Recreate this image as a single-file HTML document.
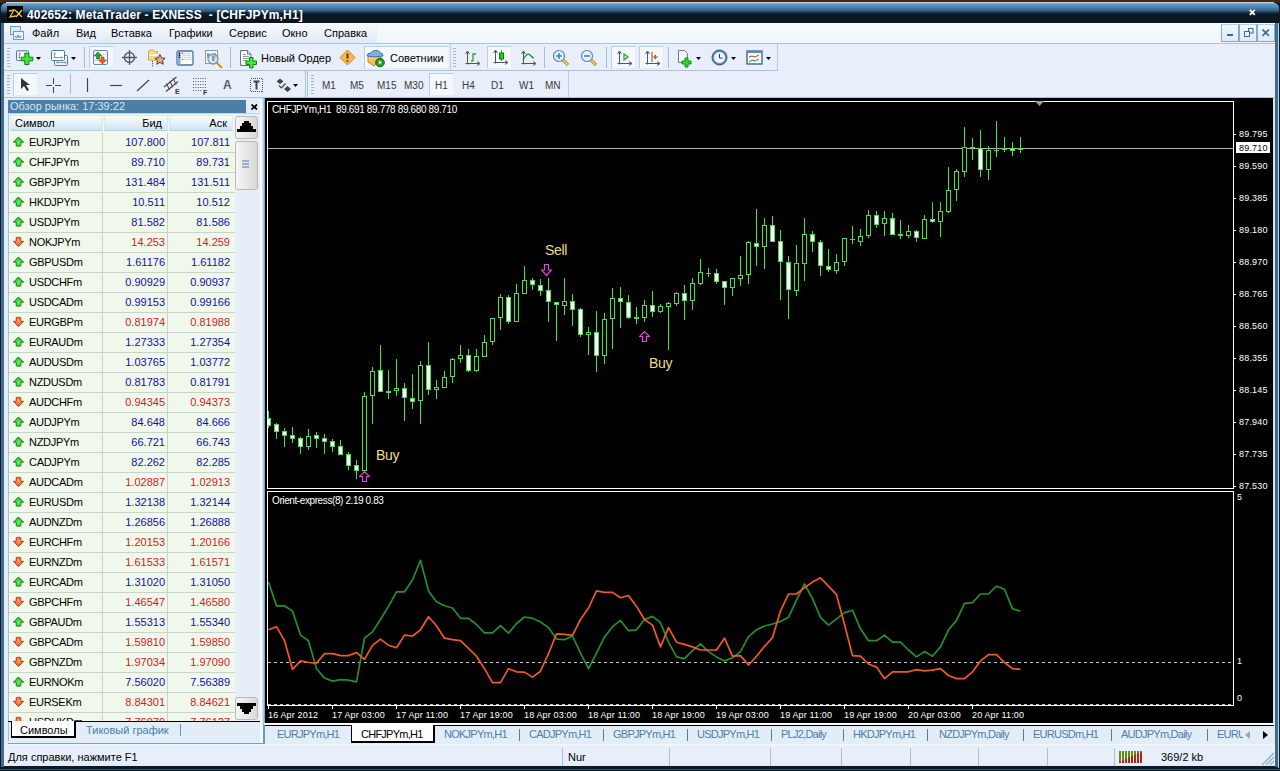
<!DOCTYPE html><html><head><meta charset="utf-8"><style>
*{margin:0;padding:0;box-sizing:border-box}
html,body{width:1280px;height:771px;overflow:hidden;background:#0b1722;font-family:"Liberation Sans",sans-serif;font-size:11px;color:#000}
.a{position:absolute}
.t{position:absolute;white-space:nowrap;line-height:13px}
</style></head><body>
<div class="a" style="left:0;top:0;width:1280px;height:3px;background:#4b2412"></div><div class="a" style="left:0;top:2px;width:1280px;height:769px;background:#0d1a25;border-radius:6px 6px 0 0"></div><div class="a" style="left:1px;top:23px;width:3px;height:744px;background:#3f6b8e"></div><div class="a" style="left:1275px;top:23px;width:3px;height:744px;background:#3f6b8e"></div><div class="a" style="left:1278px;top:8px;width:1px;height:760px;background:#b8d2e6"></div><div class="a" style="left:6px;top:2px;width:1268px;height:1px;background:#b8d8ee"></div><div class="a" style="left:1px;top:3px;width:1278px;height:20px;border-radius:5px 5px 0 0;background:linear-gradient(#80b4da 0px,#5e94bc 2px,#4a7ea6 5px,#2e5a7e 8px,#12263a 10px,#0b1722 12px,#0b1620 20px)"></div><div class="a" style="left:7px;top:6px;width:16px;height:15px;background:#000"></div><svg class="a" style="left:7px;top:6px" width="16" height="15"><path d="M2 5 L7 4 L3 11 L9 10" stroke="#e8c23a" stroke-width="1.3" fill="none"/><path d="M8 4 L15 11 M15 4 L9 11" stroke="#e8d040" stroke-width="1.3" fill="none"/></svg><div class="t" style="left:27px;top:9px;color:#fff;font-weight:bold;font-size:12px;letter-spacing:0.15px">402652: MetaTrader - EXNESS&nbsp; - [CHFJPYm,H1]</div><svg class="a" style="left:1249px;top:9px" width="7" height="7"><path d="M0.8 0.8 L5.8 5.8 M5.8 0.8 L0.8 5.8" stroke="#fff" stroke-width="1.8"/></svg><div class="a" style="left:4px;top:23px;width:1271px;height:21px;background:linear-gradient(#f8fbfd,#f0f6fa);border-bottom:1px solid #a7c4da"></div><div class="a" style="left:4px;top:24px;width:373px;height:19px;background:linear-gradient(#f4f8fc,#e8eef7 70%,#e2eaf5)"></div><svg class="a" style="left:9px;top:25px" width="16" height="16"><rect x="1.5" y="1.5" width="10" height="8" fill="#dbe8f4" stroke="#6f9cc4"/><rect x="4.5" y="6.5" width="10" height="8" fill="#e8f0f8" stroke="#6f9cc4"/><path d="M6 11 l1.5 2 l1.5 -3 l1.5 3 l1.5 -2" stroke="#4a7ab0" fill="none"/></svg><div class="t" style="left:32px;top:27px;color:#000">Файл</div><div class="t" style="left:76px;top:27px;color:#000">Вид</div><div class="t" style="left:111px;top:27px;color:#000">Вставка</div><div class="t" style="left:169px;top:27px;color:#000">Графики</div><div class="t" style="left:229px;top:27px;color:#000">Сервис</div><div class="t" style="left:282px;top:27px;color:#000">Окно</div><div class="t" style="left:324px;top:27px;color:#000">Справка</div><div class="a" style="left:1221px;top:24px;width:18px;height:18px;border:1px solid #86a8c6;border-top-color:#b8d0e4;background:linear-gradient(#eef6fc,#dcebf6)"></div><div class="a" style="left:1239px;top:24px;width:18px;height:18px;border:1px solid #86a8c6;border-top-color:#b8d0e4;background:linear-gradient(#eef6fc,#dcebf6)"></div><div class="a" style="left:1257px;top:24px;width:18px;height:18px;border:1px solid #86a8c6;border-top-color:#b8d0e4;background:linear-gradient(#eef6fc,#dcebf6)"></div><div class="a" style="left:1227px;top:34px;width:6px;height:2px;background:#3d6a90"></div><svg class="a" style="left:1244px;top:28px" width="10" height="10"><rect x="4.5" y="0.5" width="4.5" height="4.5" fill="none" stroke="#3d6a90"/><rect x="0.5" y="3.5" width="5" height="5" fill="#e8f0f8" stroke="#3d6a90"/></svg><svg class="a" style="left:1262px;top:29px" width="8" height="8"><path d="M0.5 0.5 L7 7 M7 0.5 L0.5 7" stroke="#3d6a90" stroke-width="1.7"/></svg><div class="a" style="left:4px;top:44px;width:1271px;height:54px;background:#e8eefa"></div><div class="a" style="left:4px;top:70px;width:774px;height:1px;background:#a9c4da"></div><div class="a" style="left:4px;top:97px;width:1271px;height:1px;background:#a9c4da"></div><div class="a" style="left:4px;top:44px;width:446px;height:26px;background:#e9effa"></div><div class="a" style="left:450px;top:44px;width:1px;height:26px;background:#b7cde0"></div><div class="a" style="left:451px;top:44px;width:327px;height:26px;background:#e9effa"></div><div class="a" style="left:777px;top:44px;width:1px;height:26px;background:#b7cde0"></div><div class="a" style="left:4px;top:71px;width:302px;height:26px;background:#e9effa"></div><div class="a" style="left:305px;top:71px;width:1px;height:26px;background:#a9c2d8"></div><div class="a" style="left:307px;top:71px;width:1px;height:26px;background:#a9c2d8"></div><div class="a" style="left:308px;top:71px;width:260px;height:26px;background:#e9effa"></div><div class="a" style="left:568px;top:71px;width:1px;height:26px;background:#b7cde0"></div><div class="a" style="left:7px;top:48px;width:3px;height:1px;background:#9fb5cb"></div><div class="a" style="left:7px;top:51px;width:3px;height:1px;background:#9fb5cb"></div><div class="a" style="left:7px;top:54px;width:3px;height:1px;background:#9fb5cb"></div><div class="a" style="left:7px;top:57px;width:3px;height:1px;background:#9fb5cb"></div><div class="a" style="left:7px;top:60px;width:3px;height:1px;background:#9fb5cb"></div><div class="a" style="left:7px;top:63px;width:3px;height:1px;background:#9fb5cb"></div><div class="a" style="left:7px;top:66px;width:3px;height:1px;background:#9fb5cb"></div><svg class="a" style="left:15px;top:49px" width="20" height="17"><rect x="1.5" y="1.5" width="12" height="10" rx="1" fill="#fafcfe" stroke="#4a78a8"/><path d="M2 2 h11" stroke="#8ab4dc" stroke-width="1.2"/><path d="M4.5 4 v5.5 M3.3 5.2 l1.2 -1.2 l1.2 1.2 M3.3 8.3 l1.2 1.2 l1.2 -1.2" stroke="#7a8a9a" fill="none" stroke-width=".9"/><path d="M9.8 4.1 h4.1 v4.1 h3.9 v3.6 h-3.9 v3.8 h-4.1 v-3.8 h-3.5 v-3.6 h3.5 z" fill="#3ee83e" stroke="#108010" stroke-width="1"/></svg><svg class="a" style="left:36px;top:57px" width="6" height="4"><path d="M0 0 H5 L2.5 3 Z" fill="#000"/></svg><svg class="a" style="left:50px;top:49px" width="20" height="18"><rect x="4.5" y="6.5" width="13" height="10" rx="1" fill="#eaf6fd" stroke="#4a78a8"/><rect x="1.5" y="1.5" width="13" height="10" rx="1" fill="#fafcfe" stroke="#4a78a8"/><path d="M4.6 4 v4.5 M3.5 5 l1.1 -1 l1.1 1 M3.5 8.5 h9 M11.5 7.5 l1 1 l-1 1 M6.5 13.5 h9.5 M7.5 12.5 l-1 1 l1 1 M15 12.5 l1 1 l-1 1" stroke="#7a8a9a" fill="none" stroke-width=".9"/></svg><svg class="a" style="left:71px;top:57px" width="6" height="4"><path d="M0 0 H5 L2.5 3 Z" fill="#000"/></svg><div class="a" style="left:84px;top:47px;width:1px;height:21px;background:#a3bdd4"></div><div class="a" style="left:89px;top:46px;width:25px;height:22px;background:#f4f7fb;border:1px solid #b8cfe2;border-right-color:#e4ecf4;border-bottom-color:#e4ecf4"></div><svg class="a" style="left:92px;top:49px" width="17" height="17"><rect x="1.5" y="1.5" width="14" height="14" rx="1.5" fill="#f6f9fc" stroke="#5c8ab5"/><path d="M6 3 l4 4 h-2.5 v3 h-3 v-3 h-2.5 z" fill="#22aa22" stroke="#127012" stroke-width=".6"/><path d="M10.5 15 l4 -4 h-2.5 v-3 h-3 v3 h-2.5 z" fill="#f05a20" stroke="#a83a10" stroke-width=".6"/><path d="M3 11.5 h4 M11 5.5 h3" stroke="#b0b8c0" stroke-dasharray="1 1"/></svg><svg class="a" style="left:121px;top:49px" width="17" height="17"><circle cx="8.5" cy="8.5" r="5" fill="none" stroke="#505a64" stroke-width="1.3"/><path d="M8.5 1 v15 M1 8.5 h15" stroke="#505a64" stroke-width="1.3"/></svg><svg class="a" style="left:146px;top:48px" width="22" height="20"><path d="M2.5 4 q0 -2 2 -2 h2 q1.5 0 2 1.5 h3 v8.5 h-9 z" fill="#f8e27a" stroke="#c8a838" stroke-width="1"/><rect x="3" y="5.5" width="9" height="3" fill="#fbf4e8" stroke="#d8b898" stroke-width=".6"/><path d="M14 6.5 l1.6 3.4 l3.6 .4 l-2.7 2.4 l.8 3.6 l-3.3 -1.9 l-3.3 1.9 l.8 -3.6 l-2.7 -2.4 l3.6 -.4 z" fill="#f3a282" stroke="#4a4a2a" stroke-width="1"/><path d="M6.5 13 v6" stroke="#333" stroke-dasharray="1 1.2"/></svg><svg class="a" style="left:176px;top:50px" width="18" height="16"><rect x="1" y="1" width="16" height="14" rx="1.5" fill="#fff" stroke="#3f72a8" stroke-width="1.3"/><rect x="1.5" y="1.5" width="3" height="13" fill="#8ab0d8"/><circle cx="3.5" cy="3.2" r=".8" fill="#000"/><circle cx="3.5" cy="5.3" r=".8" fill="#000"/><circle cx="3.5" cy="7.3" r=".8" fill="#000"/><path d="M6 3.2 h9 M6 5.3 h9 M6 7.3 h9 M6 9.4 h9" stroke="#b8c4d0" stroke-width=".8"/><circle cx="6.2" cy="3.2" r=".7" fill="#d02020"/><circle cx="6.2" cy="9.4" r=".7" fill="#d02020"/></svg><svg class="a" style="left:204px;top:49px" width="20" height="20"><rect x="1.5" y="1.5" width="12" height="13" fill="#f4f6f8" stroke="#8a96a2"/><path d="M4 4 v5 M11 4 v5 M3 6 h9" stroke="#4a6888" stroke-width="1"/><circle cx="9" cy="10" r="5" fill="rgba(200,216,232,.6)" stroke="#7898b8" stroke-width="1.3"/><rect x="8" y="7" width="2.5" height="5" fill="#8a9aa8"/><path d="M13 14 l5 5" stroke="#d8b030" stroke-width="2.4"/><path d="M13 14 l5 5" stroke="#6a5a20" stroke-width=".5"/></svg><div class="a" style="left:230px;top:47px;width:1px;height:21px;background:#a3bdd4"></div><svg class="a" style="left:239px;top:49px" width="22" height="20"><path d="M1.5 1.5 h7 l3.5 3.5 v11.5 h-10.5 z" fill="#f6f8fa" stroke="#6a7078"/><path d="M8.5 1.5 v3.5 h3.5" fill="#dde2e8" stroke="#6a7078"/><path d="M3.5 5.5 h3 M3.5 7.5 h6 M3.5 9.5 h6 M3.5 11.5 h4" stroke="#8a9098" stroke-width=".9" shape-rendering="crispEdges"/><path d="M10.5 8.5 h3.5 v3.5 h3.5 v3.5 h-3.5 v3.5 h-3.5 v-3.5 h-3.5 v-3.5 h3.5 z" fill="#3ee83e" stroke="#108010"/></svg><div class="t" style="left:261px;top:52px">Новый Ордер</div><svg class="a" style="left:339px;top:49px" width="17" height="17"><path d="M8.5 1 L16 8.5 L8.5 16 L1 8.5 Z" fill="#f7b84a" stroke="#c88a2a"/><path d="M8.5 4.5 v5" stroke="#5a3a10" stroke-width="2"/><circle cx="8.5" cy="12" r="1" fill="#5a3a10"/></svg><div class="a" style="left:364px;top:46px;width:85px;height:23px;background:#f4f7fb;border:1px solid #b8cfe2;border-right-color:#e4ecf4;border-bottom-color:#e4ecf4"></div><svg class="a" style="left:366px;top:48px" width="20" height="20"><path d="M2 9 h13 l-1 4 l-6 5 l-6 -4 z" fill="#f6c04a" stroke="#a07028" stroke-width=".8"/><path d="M2.5 10 h12" stroke="#f8e8a0" stroke-width="1.2"/><path d="M1 8 q0 -3 4 -3 q1.5 -3 5 -2.5 q3 -.5 4 2 q3 .5 3 3.5 q-8 2 -16 0 z" fill="#7eaee0" stroke="#3a6aa0" stroke-width=".9"/><circle cx="14" cy="14.5" r="4.3" fill="#22a022" stroke="#0e600e"/><path d="M12.8 12.3 v4.4 l3.3 -2.2 z" fill="#e8ffe8"/></svg><div class="t" style="left:390px;top:52px">Советники</div><div class="a" style="left:453px;top:48px;width:3px;height:1px;background:#9fb5cb"></div><div class="a" style="left:453px;top:51px;width:3px;height:1px;background:#9fb5cb"></div><div class="a" style="left:453px;top:54px;width:3px;height:1px;background:#9fb5cb"></div><div class="a" style="left:453px;top:57px;width:3px;height:1px;background:#9fb5cb"></div><div class="a" style="left:453px;top:60px;width:3px;height:1px;background:#9fb5cb"></div><div class="a" style="left:453px;top:63px;width:3px;height:1px;background:#9fb5cb"></div><div class="a" style="left:453px;top:66px;width:3px;height:1px;background:#9fb5cb"></div><svg class="a" style="left:464px;top:50px" width="17" height="17"><path d="M3.5 2 V14.5 M1.5 13.5 H15" stroke="#555" stroke-width="1"/><path d="M1.5 4 L3.5 1 L5.5 4 M13 11.5 L16 13.5 L13 15.5" fill="none" stroke="#555" stroke-width="1"/><path d="M9 11 v-7 h3 M7 11 h2" stroke="#22aa22" stroke-width="1.3" fill="none"/></svg><div class="a" style="left:487px;top:46px;width:25px;height:23px;background:#f4f7fb;border:1px solid #b8cfe2;border-right-color:#e4ecf4;border-bottom-color:#e4ecf4"></div><svg class="a" style="left:492px;top:49px" width="17" height="17"><path d="M3.5 2 V14.5 M1.5 13.5 H15" stroke="#555" stroke-width="1"/><path d="M1.5 4 L3.5 1 L5.5 4 M13 11.5 L16 13.5 L13 15.5" fill="none" stroke="#555" stroke-width="1"/><path d="M9.5 1 v11" stroke="#2a2" /><rect x="7.5" y="4" width="4" height="6" fill="#22cc22" stroke="#117711"/></svg><svg class="a" style="left:520px;top:50px" width="17" height="17"><path d="M3.5 2 V14.5 M1.5 13.5 H15" stroke="#555" stroke-width="1"/><path d="M1.5 4 L3.5 1 L5.5 4 M13 11.5 L16 13.5 L13 15.5" fill="none" stroke="#555" stroke-width="1"/><path d="M3 10 q4 -8 7 -5 t4 3" stroke="#228822" stroke-width="1.2" fill="none"/></svg><div class="a" style="left:544px;top:47px;width:1px;height:21px;background:#a3bdd4"></div><svg class="a" style="left:552px;top:49px" width="18" height="18"><circle cx="7" cy="7" r="5.5" fill="#e6f2fb" stroke="#4a84bc" stroke-width="1.2"/><path d="M4 7 h6 M7 4 v6" stroke="#4a84bc" stroke-width="1.6"/><path d="M11 11 l5 5" stroke="#6a5a20" stroke-width="3"/><path d="M11 11 l5 5" stroke="#f0d050" stroke-width="1.8"/></svg><svg class="a" style="left:580px;top:49px" width="18" height="18"><circle cx="7" cy="7" r="5.5" fill="#e6f2fb" stroke="#4a84bc" stroke-width="1.2"/><path d="M4 7 h6" stroke="#4a84bc" stroke-width="1.6"/><path d="M11 11 l5 5" stroke="#6a5a20" stroke-width="3"/><path d="M11 11 l5 5" stroke="#f0d050" stroke-width="1.8"/></svg><div class="a" style="left:606px;top:47px;width:1px;height:21px;background:#a3bdd4"></div><div class="a" style="left:611px;top:46px;width:25px;height:23px;background:#f4f7fb;border:1px solid #b8cfe2;border-right-color:#e4ecf4;border-bottom-color:#e4ecf4"></div><svg class="a" style="left:616px;top:50px" width="17" height="17"><path d="M3.5 2 V14.5 M1.5 13.5 H15" stroke="#555" stroke-width="1"/><path d="M1.5 4 L3.5 1 L5.5 4 M13 11.5 L16 13.5 L13 15.5" fill="none" stroke="#555" stroke-width="1"/><path d="M8 4 l4 3 l-4 3 z" fill="none" stroke="#22aa22" stroke-width="1.2"/></svg><div class="a" style="left:639px;top:46px;width:25px;height:23px;background:#f4f7fb;border:1px solid #b8cfe2;border-right-color:#e4ecf4;border-bottom-color:#e4ecf4"></div><svg class="a" style="left:644px;top:50px" width="17" height="17"><path d="M3.5 2 V14.5 M1.5 13.5 H15" stroke="#555" stroke-width="1"/><path d="M1.5 4 L3.5 1 L5.5 4 M13 11.5 L16 13.5 L13 15.5" fill="none" stroke="#555" stroke-width="1"/><path d="M8 2 v10" stroke="#555"/><path d="M14 7 h-4 M12 5 l-2 2 l2 2" stroke="#c05010" stroke-width="1.2" fill="none"/></svg><div class="a" style="left:668px;top:47px;width:1px;height:21px;background:#a3bdd4"></div><svg class="a" style="left:677px;top:49px" width="18" height="19"><path d="M1.5 1.5 h6 l3 3 v9 h-9 z" fill="#f4f6f8" stroke="#707880"/><path d="M8 9 h3 v3 h3 v3 h-3 v3 h-3 v-3 h-3 v-3 h3 z" fill="#2ed82e" stroke="#1a8a1a"/></svg><svg class="a" style="left:696px;top:57px" width="6" height="4"><path d="M0 0 H5 L2.5 3 Z" fill="#000"/></svg><svg class="a" style="left:711px;top:49px" width="18" height="18"><circle cx="8.5" cy="8.5" r="7.5" fill="#4a88cc" stroke="#2a5a94"/><circle cx="8.5" cy="8.5" r="5.6" fill="#f4f8fc" stroke="#9ab8d8" stroke-width=".6"/><path d="M8.5 5 v4 h3" stroke="#333" fill="none"/></svg><svg class="a" style="left:731px;top:57px" width="6" height="4"><path d="M0 0 H5 L2.5 3 Z" fill="#000"/></svg><svg class="a" style="left:746px;top:50px" width="18" height="16"><rect x="1" y="1" width="15" height="13" fill="#f6f9fc" stroke="#3f6a98" stroke-width="1.4"/><rect x="1" y="1" width="15" height="2" fill="#5a8ac0"/><path d="M3 7 l3 -1 l3 1 l4 -2" stroke="#b84010" fill="none"/><path d="M3 12 l3 -2 l3 1 l4 -2" stroke="#2a8a2a" fill="none"/></svg><svg class="a" style="left:766px;top:57px" width="6" height="4"><path d="M0 0 H5 L2.5 3 Z" fill="#000"/></svg><div class="a" style="left:7px;top:75px;width:3px;height:1px;background:#9fb5cb"></div><div class="a" style="left:7px;top:78px;width:3px;height:1px;background:#9fb5cb"></div><div class="a" style="left:7px;top:81px;width:3px;height:1px;background:#9fb5cb"></div><div class="a" style="left:7px;top:84px;width:3px;height:1px;background:#9fb5cb"></div><div class="a" style="left:7px;top:87px;width:3px;height:1px;background:#9fb5cb"></div><div class="a" style="left:7px;top:90px;width:3px;height:1px;background:#9fb5cb"></div><div class="a" style="left:7px;top:93px;width:3px;height:1px;background:#9fb5cb"></div><div class="a" style="left:13px;top:73px;width:25px;height:23px;background:#f4f7fb;border:1px solid #b8cfe2;border-right-color:#e4ecf4;border-bottom-color:#e4ecf4"></div><svg class="a" style="left:20px;top:77px" width="12" height="15"><path d="M1 1 L1 12 L4 9 L7 14 L9 13 L6 8 L10 8 Z" fill="#333"/></svg><svg class="a" style="left:45px;top:77px" width="17" height="17"><path d="M8.5 1 v6 M8.5 10 v6 M1 8.5 h6 M10 8.5 h6" stroke="#444" stroke-width="1"/></svg><div class="a" style="left:70px;top:74px;width:1px;height:20px;background:#a3bdd4"></div><svg class="a" style="left:86px;top:77px" width="3" height="16"><path d="M1.5 1 v14" stroke="#444" stroke-width="1.2"/></svg><svg class="a" style="left:109px;top:77px" width="15" height="16"><path d="M1 8.5 h12" stroke="#444" stroke-width="1.2"/></svg><svg class="a" style="left:136px;top:77px" width="15" height="16"><path d="M1 14 L13 3" stroke="#444" stroke-width="1.2"/></svg><svg class="a" style="left:162px;top:76px" width="20" height="20"><path d="M2 11 L14.5 1 M4 15.5 L16 5.5" stroke="#444" stroke-width="1.2"/><path d="M4.5 7.5 L7.5 14 M7.8 4.8 L10.8 11.3 M11.1 2.1 L14.1 8.6" stroke="#444" stroke-width="1"/><text x="13" y="18" font-size="7" font-weight="bold" fill="#333" font-family="Liberation Sans">E</text></svg><svg class="a" style="left:192px;top:77px" width="17" height="18"><path d="M1 1.5 h13 M1 4.5 h13 M1 7.5 h13 M1 10.5 h13 M1 13.5 h9" stroke="#555" stroke-dasharray="1 1.4"/><text x="11" y="17.5" font-size="7" font-weight="bold" fill="#333" font-family="Liberation Sans">F</text></svg><div class="t" style="left:223px;top:79px;font-weight:bold;font-size:12px;color:#575f66">A</div><svg class="a" style="left:249px;top:77px" width="15" height="16"><rect x="1.5" y="1.5" width="12" height="13" fill="none" stroke="#555" stroke-width="1" stroke-dasharray="1 1" shape-rendering="crispEdges"/><path d="M4.5 4.5 h6 M7.5 4.5 v8" stroke="#444" stroke-width="2"/></svg><svg class="a" style="left:276px;top:78px" width="16" height="15"><path d="M4 0.5 L7.5 3.5 L4 6 L0.5 3.5 Z M11.5 8 L15 11 L11.5 14 L8 11 Z" fill="#444"/><path d="M3 7.5 l2.5 2.5 l4 -4.5" stroke="#444" stroke-width="1.2" fill="none"/></svg><svg class="a" style="left:293px;top:84px" width="6" height="4"><path d="M0 0 H5 L2.5 3 Z" fill="#000"/></svg><div class="a" style="left:311px;top:75px;width:3px;height:1px;background:#9fb5cb"></div><div class="a" style="left:311px;top:78px;width:3px;height:1px;background:#9fb5cb"></div><div class="a" style="left:311px;top:81px;width:3px;height:1px;background:#9fb5cb"></div><div class="a" style="left:311px;top:84px;width:3px;height:1px;background:#9fb5cb"></div><div class="a" style="left:311px;top:87px;width:3px;height:1px;background:#9fb5cb"></div><div class="a" style="left:311px;top:90px;width:3px;height:1px;background:#9fb5cb"></div><div class="a" style="left:311px;top:93px;width:3px;height:1px;background:#9fb5cb"></div><div class="t" style="left:322px;top:79px;color:#3a3a3a;font-size:10px">M1</div><div class="t" style="left:350px;top:79px;color:#3a3a3a;font-size:10px">M5</div><div class="t" style="left:377px;top:79px;color:#3a3a3a;font-size:10px">M15</div><div class="t" style="left:404px;top:79px;color:#3a3a3a;font-size:10px">M30</div><div class="t" style="left:462px;top:79px;color:#3a3a3a;font-size:10px">H4</div><div class="t" style="left:491px;top:79px;color:#3a3a3a;font-size:10px">D1</div><div class="t" style="left:519px;top:79px;color:#3a3a3a;font-size:10px">W1</div><div class="t" style="left:545px;top:79px;color:#3a3a3a;font-size:10px">MN</div><div class="a" style="left:429px;top:73px;width:25px;height:23px;background:#f4f7fb;border:1px solid #b8cfe2;border-right-color:#e4ecf4;border-bottom-color:#e4ecf4"></div><div class="t" style="left:435px;top:79px;color:#3a3a3a;font-size:10px">H1</div><svg width="0" height="0" style="position:absolute"><defs><radialGradient id="gu" cx="50%" cy="60%" r="60%"><stop offset="0" stop-color="#6cf86c"/><stop offset="1" stop-color="#1aa81a"/></radialGradient><radialGradient id="gd" cx="50%" cy="40%" r="60%"><stop offset="0" stop-color="#ffa070"/><stop offset="1" stop-color="#e84e14"/></radialGradient></defs></svg><div class="a" style="left:4px;top:98px;width:261px;height:647px;background:#e3edf7"></div><div class="a" style="left:8px;top:100px;width:238px;height:13px;background:#4a7fa7"></div><div class="t" style="left:10px;top:100px;color:#d6e6f2;font-size:11px">Обзор рынка: 17:39:22</div><svg class="a" style="left:251px;top:104px" width="7" height="6"><path d="M0.5 0.5 L6 5.5 M6 0.5 L0.5 5.5" stroke="#000" stroke-width="1.7"/></svg><div class="a" style="left:8px;top:113px;width:252px;height:1px;background:#b9d3e8"></div><div class="a" style="left:8px;top:114px;width:227px;height:607px;background:#f0f8ec;border-left:1px solid #a9c1d6"></div><div class="a" style="left:9px;top:115px;width:226px;height:17px;background:#f0f8ec"></div><div class="a" style="left:10px;top:115px;width:93px;height:16px;background:linear-gradient(#f7fbfe,#e6f1f9 50%,#cfe3f1);border:1px solid #d8e8f4;border-bottom-color:#b4d0e4"></div><div class="a" style="left:104px;top:115px;width:64px;height:16px;background:linear-gradient(#f7fbfe,#e6f1f9 50%,#cfe3f1);border:1px solid #d8e8f4;border-bottom-color:#b4d0e4"></div><div class="a" style="left:169px;top:115px;width:64px;height:16px;background:linear-gradient(#f7fbfe,#e6f1f9 50%,#cfe3f1);border:1px solid #d8e8f4;border-bottom-color:#b4d0e4"></div><div class="t" style="left:15px;top:117px">Символ</div><div class="t" style="left:104px;top:117px;width:58px;text-align:right">Бид</div><div class="t" style="left:169px;top:117px;width:58px;text-align:right">Аск</div><div class="a" style="left:9px;top:133px;width:226px;height:20px;overflow:hidden"><div class="a" style="left:0;top:19px;width:226px;height:1px;background:#c9d3c9"></div><div class="a" style="left:93px;top:0;width:1px;height:20px;background:#c9d3c9"></div><div class="a" style="left:158px;top:0;width:1px;height:20px;background:#c9d3c9"></div><svg class="a" style="left:4px;top:3px" width="12" height="12"><path d="M5.5 1 L10.6 6.2 H7.8 V9.8 Q5.5 10.8 3.2 9.8 V6.2 H0.4 Z" fill="url(#gu)" stroke="#0e760e" stroke-width=".9"/></svg><div class="t" style="left:20px;top:3px;color:#000;letter-spacing:-0.3px">EURJPYm</div><div class="t" style="left:94px;top:3px;width:62px;text-align:right;color:#1010a4">107.800</div><div class="t" style="left:159px;top:3px;width:62px;text-align:right;color:#1010a4">107.811</div></div><div class="a" style="left:9px;top:153px;width:226px;height:20px;overflow:hidden"><div class="a" style="left:0;top:19px;width:226px;height:1px;background:#c9d3c9"></div><div class="a" style="left:93px;top:0;width:1px;height:20px;background:#c9d3c9"></div><div class="a" style="left:158px;top:0;width:1px;height:20px;background:#c9d3c9"></div><svg class="a" style="left:4px;top:3px" width="12" height="12"><path d="M5.5 1 L10.6 6.2 H7.8 V9.8 Q5.5 10.8 3.2 9.8 V6.2 H0.4 Z" fill="url(#gu)" stroke="#0e760e" stroke-width=".9"/></svg><div class="t" style="left:20px;top:3px;color:#000;letter-spacing:-0.3px">CHFJPYm</div><div class="t" style="left:94px;top:3px;width:62px;text-align:right;color:#1010a4">89.710</div><div class="t" style="left:159px;top:3px;width:62px;text-align:right;color:#1010a4">89.731</div></div><div class="a" style="left:9px;top:173px;width:226px;height:20px;overflow:hidden"><div class="a" style="left:0;top:19px;width:226px;height:1px;background:#c9d3c9"></div><div class="a" style="left:93px;top:0;width:1px;height:20px;background:#c9d3c9"></div><div class="a" style="left:158px;top:0;width:1px;height:20px;background:#c9d3c9"></div><svg class="a" style="left:4px;top:3px" width="12" height="12"><path d="M5.5 1 L10.6 6.2 H7.8 V9.8 Q5.5 10.8 3.2 9.8 V6.2 H0.4 Z" fill="url(#gu)" stroke="#0e760e" stroke-width=".9"/></svg><div class="t" style="left:20px;top:3px;color:#000;letter-spacing:-0.3px">GBPJPYm</div><div class="t" style="left:94px;top:3px;width:62px;text-align:right;color:#1010a4">131.484</div><div class="t" style="left:159px;top:3px;width:62px;text-align:right;color:#1010a4">131.511</div></div><div class="a" style="left:9px;top:193px;width:226px;height:20px;overflow:hidden"><div class="a" style="left:0;top:19px;width:226px;height:1px;background:#c9d3c9"></div><div class="a" style="left:93px;top:0;width:1px;height:20px;background:#c9d3c9"></div><div class="a" style="left:158px;top:0;width:1px;height:20px;background:#c9d3c9"></div><svg class="a" style="left:4px;top:3px" width="12" height="12"><path d="M5.5 1 L10.6 6.2 H7.8 V9.8 Q5.5 10.8 3.2 9.8 V6.2 H0.4 Z" fill="url(#gu)" stroke="#0e760e" stroke-width=".9"/></svg><div class="t" style="left:20px;top:3px;color:#000;letter-spacing:-0.3px">HKDJPYm</div><div class="t" style="left:94px;top:3px;width:62px;text-align:right;color:#1010a4">10.511</div><div class="t" style="left:159px;top:3px;width:62px;text-align:right;color:#1010a4">10.512</div></div><div class="a" style="left:9px;top:213px;width:226px;height:20px;overflow:hidden"><div class="a" style="left:0;top:19px;width:226px;height:1px;background:#c9d3c9"></div><div class="a" style="left:93px;top:0;width:1px;height:20px;background:#c9d3c9"></div><div class="a" style="left:158px;top:0;width:1px;height:20px;background:#c9d3c9"></div><svg class="a" style="left:4px;top:3px" width="12" height="12"><path d="M5.5 1 L10.6 6.2 H7.8 V9.8 Q5.5 10.8 3.2 9.8 V6.2 H0.4 Z" fill="url(#gu)" stroke="#0e760e" stroke-width=".9"/></svg><div class="t" style="left:20px;top:3px;color:#000;letter-spacing:-0.3px">USDJPYm</div><div class="t" style="left:94px;top:3px;width:62px;text-align:right;color:#1010a4">81.582</div><div class="t" style="left:159px;top:3px;width:62px;text-align:right;color:#1010a4">81.586</div></div><div class="a" style="left:9px;top:233px;width:226px;height:20px;overflow:hidden"><div class="a" style="left:0;top:19px;width:226px;height:1px;background:#c9d3c9"></div><div class="a" style="left:93px;top:0;width:1px;height:20px;background:#c9d3c9"></div><div class="a" style="left:158px;top:0;width:1px;height:20px;background:#c9d3c9"></div><svg class="a" style="left:4px;top:3px" width="12" height="12"><path d="M5.5 10.5 L10.6 5.3 H7.8 V1.7 Q5.5 .7 3.2 1.7 V5.3 H0.4 Z" fill="url(#gd)" stroke="#b03a0c" stroke-width=".9"/></svg><div class="t" style="left:20px;top:3px;color:#000;letter-spacing:-0.3px">NOKJPYm</div><div class="t" style="left:94px;top:3px;width:62px;text-align:right;color:#d41a1a">14.253</div><div class="t" style="left:159px;top:3px;width:62px;text-align:right;color:#d41a1a">14.259</div></div><div class="a" style="left:9px;top:253px;width:226px;height:20px;overflow:hidden"><div class="a" style="left:0;top:19px;width:226px;height:1px;background:#c9d3c9"></div><div class="a" style="left:93px;top:0;width:1px;height:20px;background:#c9d3c9"></div><div class="a" style="left:158px;top:0;width:1px;height:20px;background:#c9d3c9"></div><svg class="a" style="left:4px;top:3px" width="12" height="12"><path d="M5.5 1 L10.6 6.2 H7.8 V9.8 Q5.5 10.8 3.2 9.8 V6.2 H0.4 Z" fill="url(#gu)" stroke="#0e760e" stroke-width=".9"/></svg><div class="t" style="left:20px;top:3px;color:#000;letter-spacing:-0.3px">GBPUSDm</div><div class="t" style="left:94px;top:3px;width:62px;text-align:right;color:#1010a4">1.61176</div><div class="t" style="left:159px;top:3px;width:62px;text-align:right;color:#1010a4">1.61182</div></div><div class="a" style="left:9px;top:273px;width:226px;height:20px;overflow:hidden"><div class="a" style="left:0;top:19px;width:226px;height:1px;background:#c9d3c9"></div><div class="a" style="left:93px;top:0;width:1px;height:20px;background:#c9d3c9"></div><div class="a" style="left:158px;top:0;width:1px;height:20px;background:#c9d3c9"></div><svg class="a" style="left:4px;top:3px" width="12" height="12"><path d="M5.5 1 L10.6 6.2 H7.8 V9.8 Q5.5 10.8 3.2 9.8 V6.2 H0.4 Z" fill="url(#gu)" stroke="#0e760e" stroke-width=".9"/></svg><div class="t" style="left:20px;top:3px;color:#000;letter-spacing:-0.3px">USDCHFm</div><div class="t" style="left:94px;top:3px;width:62px;text-align:right;color:#1010a4">0.90929</div><div class="t" style="left:159px;top:3px;width:62px;text-align:right;color:#1010a4">0.90937</div></div><div class="a" style="left:9px;top:293px;width:226px;height:20px;overflow:hidden"><div class="a" style="left:0;top:19px;width:226px;height:1px;background:#c9d3c9"></div><div class="a" style="left:93px;top:0;width:1px;height:20px;background:#c9d3c9"></div><div class="a" style="left:158px;top:0;width:1px;height:20px;background:#c9d3c9"></div><svg class="a" style="left:4px;top:3px" width="12" height="12"><path d="M5.5 1 L10.6 6.2 H7.8 V9.8 Q5.5 10.8 3.2 9.8 V6.2 H0.4 Z" fill="url(#gu)" stroke="#0e760e" stroke-width=".9"/></svg><div class="t" style="left:20px;top:3px;color:#000;letter-spacing:-0.3px">USDCADm</div><div class="t" style="left:94px;top:3px;width:62px;text-align:right;color:#1010a4">0.99153</div><div class="t" style="left:159px;top:3px;width:62px;text-align:right;color:#1010a4">0.99166</div></div><div class="a" style="left:9px;top:313px;width:226px;height:20px;overflow:hidden"><div class="a" style="left:0;top:19px;width:226px;height:1px;background:#c9d3c9"></div><div class="a" style="left:93px;top:0;width:1px;height:20px;background:#c9d3c9"></div><div class="a" style="left:158px;top:0;width:1px;height:20px;background:#c9d3c9"></div><svg class="a" style="left:4px;top:3px" width="12" height="12"><path d="M5.5 10.5 L10.6 5.3 H7.8 V1.7 Q5.5 .7 3.2 1.7 V5.3 H0.4 Z" fill="url(#gd)" stroke="#b03a0c" stroke-width=".9"/></svg><div class="t" style="left:20px;top:3px;color:#000;letter-spacing:-0.3px">EURGBPm</div><div class="t" style="left:94px;top:3px;width:62px;text-align:right;color:#d41a1a">0.81974</div><div class="t" style="left:159px;top:3px;width:62px;text-align:right;color:#d41a1a">0.81988</div></div><div class="a" style="left:9px;top:333px;width:226px;height:20px;overflow:hidden"><div class="a" style="left:0;top:19px;width:226px;height:1px;background:#c9d3c9"></div><div class="a" style="left:93px;top:0;width:1px;height:20px;background:#c9d3c9"></div><div class="a" style="left:158px;top:0;width:1px;height:20px;background:#c9d3c9"></div><svg class="a" style="left:4px;top:3px" width="12" height="12"><path d="M5.5 1 L10.6 6.2 H7.8 V9.8 Q5.5 10.8 3.2 9.8 V6.2 H0.4 Z" fill="url(#gu)" stroke="#0e760e" stroke-width=".9"/></svg><div class="t" style="left:20px;top:3px;color:#000;letter-spacing:-0.3px">EURAUDm</div><div class="t" style="left:94px;top:3px;width:62px;text-align:right;color:#1010a4">1.27333</div><div class="t" style="left:159px;top:3px;width:62px;text-align:right;color:#1010a4">1.27354</div></div><div class="a" style="left:9px;top:353px;width:226px;height:20px;overflow:hidden"><div class="a" style="left:0;top:19px;width:226px;height:1px;background:#c9d3c9"></div><div class="a" style="left:93px;top:0;width:1px;height:20px;background:#c9d3c9"></div><div class="a" style="left:158px;top:0;width:1px;height:20px;background:#c9d3c9"></div><svg class="a" style="left:4px;top:3px" width="12" height="12"><path d="M5.5 1 L10.6 6.2 H7.8 V9.8 Q5.5 10.8 3.2 9.8 V6.2 H0.4 Z" fill="url(#gu)" stroke="#0e760e" stroke-width=".9"/></svg><div class="t" style="left:20px;top:3px;color:#000;letter-spacing:-0.3px">AUDUSDm</div><div class="t" style="left:94px;top:3px;width:62px;text-align:right;color:#1010a4">1.03765</div><div class="t" style="left:159px;top:3px;width:62px;text-align:right;color:#1010a4">1.03772</div></div><div class="a" style="left:9px;top:373px;width:226px;height:20px;overflow:hidden"><div class="a" style="left:0;top:19px;width:226px;height:1px;background:#c9d3c9"></div><div class="a" style="left:93px;top:0;width:1px;height:20px;background:#c9d3c9"></div><div class="a" style="left:158px;top:0;width:1px;height:20px;background:#c9d3c9"></div><svg class="a" style="left:4px;top:3px" width="12" height="12"><path d="M5.5 1 L10.6 6.2 H7.8 V9.8 Q5.5 10.8 3.2 9.8 V6.2 H0.4 Z" fill="url(#gu)" stroke="#0e760e" stroke-width=".9"/></svg><div class="t" style="left:20px;top:3px;color:#000;letter-spacing:-0.3px">NZDUSDm</div><div class="t" style="left:94px;top:3px;width:62px;text-align:right;color:#1010a4">0.81783</div><div class="t" style="left:159px;top:3px;width:62px;text-align:right;color:#1010a4">0.81791</div></div><div class="a" style="left:9px;top:393px;width:226px;height:20px;overflow:hidden"><div class="a" style="left:0;top:19px;width:226px;height:1px;background:#c9d3c9"></div><div class="a" style="left:93px;top:0;width:1px;height:20px;background:#c9d3c9"></div><div class="a" style="left:158px;top:0;width:1px;height:20px;background:#c9d3c9"></div><svg class="a" style="left:4px;top:3px" width="12" height="12"><path d="M5.5 10.5 L10.6 5.3 H7.8 V1.7 Q5.5 .7 3.2 1.7 V5.3 H0.4 Z" fill="url(#gd)" stroke="#b03a0c" stroke-width=".9"/></svg><div class="t" style="left:20px;top:3px;color:#000;letter-spacing:-0.3px">AUDCHFm</div><div class="t" style="left:94px;top:3px;width:62px;text-align:right;color:#d41a1a">0.94345</div><div class="t" style="left:159px;top:3px;width:62px;text-align:right;color:#d41a1a">0.94373</div></div><div class="a" style="left:9px;top:413px;width:226px;height:20px;overflow:hidden"><div class="a" style="left:0;top:19px;width:226px;height:1px;background:#c9d3c9"></div><div class="a" style="left:93px;top:0;width:1px;height:20px;background:#c9d3c9"></div><div class="a" style="left:158px;top:0;width:1px;height:20px;background:#c9d3c9"></div><svg class="a" style="left:4px;top:3px" width="12" height="12"><path d="M5.5 1 L10.6 6.2 H7.8 V9.8 Q5.5 10.8 3.2 9.8 V6.2 H0.4 Z" fill="url(#gu)" stroke="#0e760e" stroke-width=".9"/></svg><div class="t" style="left:20px;top:3px;color:#000;letter-spacing:-0.3px">AUDJPYm</div><div class="t" style="left:94px;top:3px;width:62px;text-align:right;color:#1010a4">84.648</div><div class="t" style="left:159px;top:3px;width:62px;text-align:right;color:#1010a4">84.666</div></div><div class="a" style="left:9px;top:433px;width:226px;height:20px;overflow:hidden"><div class="a" style="left:0;top:19px;width:226px;height:1px;background:#c9d3c9"></div><div class="a" style="left:93px;top:0;width:1px;height:20px;background:#c9d3c9"></div><div class="a" style="left:158px;top:0;width:1px;height:20px;background:#c9d3c9"></div><svg class="a" style="left:4px;top:3px" width="12" height="12"><path d="M5.5 1 L10.6 6.2 H7.8 V9.8 Q5.5 10.8 3.2 9.8 V6.2 H0.4 Z" fill="url(#gu)" stroke="#0e760e" stroke-width=".9"/></svg><div class="t" style="left:20px;top:3px;color:#000;letter-spacing:-0.3px">NZDJPYm</div><div class="t" style="left:94px;top:3px;width:62px;text-align:right;color:#1010a4">66.721</div><div class="t" style="left:159px;top:3px;width:62px;text-align:right;color:#1010a4">66.743</div></div><div class="a" style="left:9px;top:453px;width:226px;height:20px;overflow:hidden"><div class="a" style="left:0;top:19px;width:226px;height:1px;background:#c9d3c9"></div><div class="a" style="left:93px;top:0;width:1px;height:20px;background:#c9d3c9"></div><div class="a" style="left:158px;top:0;width:1px;height:20px;background:#c9d3c9"></div><svg class="a" style="left:4px;top:3px" width="12" height="12"><path d="M5.5 1 L10.6 6.2 H7.8 V9.8 Q5.5 10.8 3.2 9.8 V6.2 H0.4 Z" fill="url(#gu)" stroke="#0e760e" stroke-width=".9"/></svg><div class="t" style="left:20px;top:3px;color:#000;letter-spacing:-0.3px">CADJPYm</div><div class="t" style="left:94px;top:3px;width:62px;text-align:right;color:#1010a4">82.262</div><div class="t" style="left:159px;top:3px;width:62px;text-align:right;color:#1010a4">82.285</div></div><div class="a" style="left:9px;top:473px;width:226px;height:20px;overflow:hidden"><div class="a" style="left:0;top:19px;width:226px;height:1px;background:#c9d3c9"></div><div class="a" style="left:93px;top:0;width:1px;height:20px;background:#c9d3c9"></div><div class="a" style="left:158px;top:0;width:1px;height:20px;background:#c9d3c9"></div><svg class="a" style="left:4px;top:3px" width="12" height="12"><path d="M5.5 10.5 L10.6 5.3 H7.8 V1.7 Q5.5 .7 3.2 1.7 V5.3 H0.4 Z" fill="url(#gd)" stroke="#b03a0c" stroke-width=".9"/></svg><div class="t" style="left:20px;top:3px;color:#000;letter-spacing:-0.3px">AUDCADm</div><div class="t" style="left:94px;top:3px;width:62px;text-align:right;color:#d41a1a">1.02887</div><div class="t" style="left:159px;top:3px;width:62px;text-align:right;color:#d41a1a">1.02913</div></div><div class="a" style="left:9px;top:493px;width:226px;height:20px;overflow:hidden"><div class="a" style="left:0;top:19px;width:226px;height:1px;background:#c9d3c9"></div><div class="a" style="left:93px;top:0;width:1px;height:20px;background:#c9d3c9"></div><div class="a" style="left:158px;top:0;width:1px;height:20px;background:#c9d3c9"></div><svg class="a" style="left:4px;top:3px" width="12" height="12"><path d="M5.5 1 L10.6 6.2 H7.8 V9.8 Q5.5 10.8 3.2 9.8 V6.2 H0.4 Z" fill="url(#gu)" stroke="#0e760e" stroke-width=".9"/></svg><div class="t" style="left:20px;top:3px;color:#000;letter-spacing:-0.3px">EURUSDm</div><div class="t" style="left:94px;top:3px;width:62px;text-align:right;color:#1010a4">1.32138</div><div class="t" style="left:159px;top:3px;width:62px;text-align:right;color:#1010a4">1.32144</div></div><div class="a" style="left:9px;top:513px;width:226px;height:20px;overflow:hidden"><div class="a" style="left:0;top:19px;width:226px;height:1px;background:#c9d3c9"></div><div class="a" style="left:93px;top:0;width:1px;height:20px;background:#c9d3c9"></div><div class="a" style="left:158px;top:0;width:1px;height:20px;background:#c9d3c9"></div><svg class="a" style="left:4px;top:3px" width="12" height="12"><path d="M5.5 1 L10.6 6.2 H7.8 V9.8 Q5.5 10.8 3.2 9.8 V6.2 H0.4 Z" fill="url(#gu)" stroke="#0e760e" stroke-width=".9"/></svg><div class="t" style="left:20px;top:3px;color:#000;letter-spacing:-0.3px">AUDNZDm</div><div class="t" style="left:94px;top:3px;width:62px;text-align:right;color:#1010a4">1.26856</div><div class="t" style="left:159px;top:3px;width:62px;text-align:right;color:#1010a4">1.26888</div></div><div class="a" style="left:9px;top:533px;width:226px;height:20px;overflow:hidden"><div class="a" style="left:0;top:19px;width:226px;height:1px;background:#c9d3c9"></div><div class="a" style="left:93px;top:0;width:1px;height:20px;background:#c9d3c9"></div><div class="a" style="left:158px;top:0;width:1px;height:20px;background:#c9d3c9"></div><svg class="a" style="left:4px;top:3px" width="12" height="12"><path d="M5.5 10.5 L10.6 5.3 H7.8 V1.7 Q5.5 .7 3.2 1.7 V5.3 H0.4 Z" fill="url(#gd)" stroke="#b03a0c" stroke-width=".9"/></svg><div class="t" style="left:20px;top:3px;color:#000;letter-spacing:-0.3px">EURCHFm</div><div class="t" style="left:94px;top:3px;width:62px;text-align:right;color:#d41a1a">1.20153</div><div class="t" style="left:159px;top:3px;width:62px;text-align:right;color:#d41a1a">1.20166</div></div><div class="a" style="left:9px;top:553px;width:226px;height:20px;overflow:hidden"><div class="a" style="left:0;top:19px;width:226px;height:1px;background:#c9d3c9"></div><div class="a" style="left:93px;top:0;width:1px;height:20px;background:#c9d3c9"></div><div class="a" style="left:158px;top:0;width:1px;height:20px;background:#c9d3c9"></div><svg class="a" style="left:4px;top:3px" width="12" height="12"><path d="M5.5 10.5 L10.6 5.3 H7.8 V1.7 Q5.5 .7 3.2 1.7 V5.3 H0.4 Z" fill="url(#gd)" stroke="#b03a0c" stroke-width=".9"/></svg><div class="t" style="left:20px;top:3px;color:#000;letter-spacing:-0.3px">EURNZDm</div><div class="t" style="left:94px;top:3px;width:62px;text-align:right;color:#d41a1a">1.61533</div><div class="t" style="left:159px;top:3px;width:62px;text-align:right;color:#d41a1a">1.61571</div></div><div class="a" style="left:9px;top:573px;width:226px;height:20px;overflow:hidden"><div class="a" style="left:0;top:19px;width:226px;height:1px;background:#c9d3c9"></div><div class="a" style="left:93px;top:0;width:1px;height:20px;background:#c9d3c9"></div><div class="a" style="left:158px;top:0;width:1px;height:20px;background:#c9d3c9"></div><svg class="a" style="left:4px;top:3px" width="12" height="12"><path d="M5.5 1 L10.6 6.2 H7.8 V9.8 Q5.5 10.8 3.2 9.8 V6.2 H0.4 Z" fill="url(#gu)" stroke="#0e760e" stroke-width=".9"/></svg><div class="t" style="left:20px;top:3px;color:#000;letter-spacing:-0.3px">EURCADm</div><div class="t" style="left:94px;top:3px;width:62px;text-align:right;color:#1010a4">1.31020</div><div class="t" style="left:159px;top:3px;width:62px;text-align:right;color:#1010a4">1.31050</div></div><div class="a" style="left:9px;top:593px;width:226px;height:20px;overflow:hidden"><div class="a" style="left:0;top:19px;width:226px;height:1px;background:#c9d3c9"></div><div class="a" style="left:93px;top:0;width:1px;height:20px;background:#c9d3c9"></div><div class="a" style="left:158px;top:0;width:1px;height:20px;background:#c9d3c9"></div><svg class="a" style="left:4px;top:3px" width="12" height="12"><path d="M5.5 10.5 L10.6 5.3 H7.8 V1.7 Q5.5 .7 3.2 1.7 V5.3 H0.4 Z" fill="url(#gd)" stroke="#b03a0c" stroke-width=".9"/></svg><div class="t" style="left:20px;top:3px;color:#000;letter-spacing:-0.3px">GBPCHFm</div><div class="t" style="left:94px;top:3px;width:62px;text-align:right;color:#d41a1a">1.46547</div><div class="t" style="left:159px;top:3px;width:62px;text-align:right;color:#d41a1a">1.46580</div></div><div class="a" style="left:9px;top:613px;width:226px;height:20px;overflow:hidden"><div class="a" style="left:0;top:19px;width:226px;height:1px;background:#c9d3c9"></div><div class="a" style="left:93px;top:0;width:1px;height:20px;background:#c9d3c9"></div><div class="a" style="left:158px;top:0;width:1px;height:20px;background:#c9d3c9"></div><svg class="a" style="left:4px;top:3px" width="12" height="12"><path d="M5.5 1 L10.6 6.2 H7.8 V9.8 Q5.5 10.8 3.2 9.8 V6.2 H0.4 Z" fill="url(#gu)" stroke="#0e760e" stroke-width=".9"/></svg><div class="t" style="left:20px;top:3px;color:#000;letter-spacing:-0.3px">GBPAUDm</div><div class="t" style="left:94px;top:3px;width:62px;text-align:right;color:#1010a4">1.55313</div><div class="t" style="left:159px;top:3px;width:62px;text-align:right;color:#1010a4">1.55340</div></div><div class="a" style="left:9px;top:633px;width:226px;height:20px;overflow:hidden"><div class="a" style="left:0;top:19px;width:226px;height:1px;background:#c9d3c9"></div><div class="a" style="left:93px;top:0;width:1px;height:20px;background:#c9d3c9"></div><div class="a" style="left:158px;top:0;width:1px;height:20px;background:#c9d3c9"></div><svg class="a" style="left:4px;top:3px" width="12" height="12"><path d="M5.5 10.5 L10.6 5.3 H7.8 V1.7 Q5.5 .7 3.2 1.7 V5.3 H0.4 Z" fill="url(#gd)" stroke="#b03a0c" stroke-width=".9"/></svg><div class="t" style="left:20px;top:3px;color:#000;letter-spacing:-0.3px">GBPCADm</div><div class="t" style="left:94px;top:3px;width:62px;text-align:right;color:#d41a1a">1.59810</div><div class="t" style="left:159px;top:3px;width:62px;text-align:right;color:#d41a1a">1.59850</div></div><div class="a" style="left:9px;top:653px;width:226px;height:20px;overflow:hidden"><div class="a" style="left:0;top:19px;width:226px;height:1px;background:#c9d3c9"></div><div class="a" style="left:93px;top:0;width:1px;height:20px;background:#c9d3c9"></div><div class="a" style="left:158px;top:0;width:1px;height:20px;background:#c9d3c9"></div><svg class="a" style="left:4px;top:3px" width="12" height="12"><path d="M5.5 10.5 L10.6 5.3 H7.8 V1.7 Q5.5 .7 3.2 1.7 V5.3 H0.4 Z" fill="url(#gd)" stroke="#b03a0c" stroke-width=".9"/></svg><div class="t" style="left:20px;top:3px;color:#000;letter-spacing:-0.3px">GBPNZDm</div><div class="t" style="left:94px;top:3px;width:62px;text-align:right;color:#d41a1a">1.97034</div><div class="t" style="left:159px;top:3px;width:62px;text-align:right;color:#d41a1a">1.97090</div></div><div class="a" style="left:9px;top:673px;width:226px;height:20px;overflow:hidden"><div class="a" style="left:0;top:19px;width:226px;height:1px;background:#c9d3c9"></div><div class="a" style="left:93px;top:0;width:1px;height:20px;background:#c9d3c9"></div><div class="a" style="left:158px;top:0;width:1px;height:20px;background:#c9d3c9"></div><svg class="a" style="left:4px;top:3px" width="12" height="12"><path d="M5.5 1 L10.6 6.2 H7.8 V9.8 Q5.5 10.8 3.2 9.8 V6.2 H0.4 Z" fill="url(#gu)" stroke="#0e760e" stroke-width=".9"/></svg><div class="t" style="left:20px;top:3px;color:#000;letter-spacing:-0.3px">EURNOKm</div><div class="t" style="left:94px;top:3px;width:62px;text-align:right;color:#1010a4">7.56020</div><div class="t" style="left:159px;top:3px;width:62px;text-align:right;color:#1010a4">7.56389</div></div><div class="a" style="left:9px;top:693px;width:226px;height:20px;overflow:hidden"><div class="a" style="left:0;top:19px;width:226px;height:1px;background:#c9d3c9"></div><div class="a" style="left:93px;top:0;width:1px;height:20px;background:#c9d3c9"></div><div class="a" style="left:158px;top:0;width:1px;height:20px;background:#c9d3c9"></div><svg class="a" style="left:4px;top:3px" width="12" height="12"><path d="M5.5 10.5 L10.6 5.3 H7.8 V1.7 Q5.5 .7 3.2 1.7 V5.3 H0.4 Z" fill="url(#gd)" stroke="#b03a0c" stroke-width=".9"/></svg><div class="t" style="left:20px;top:3px;color:#000;letter-spacing:-0.3px">EURSEKm</div><div class="t" style="left:94px;top:3px;width:62px;text-align:right;color:#d41a1a">8.84301</div><div class="t" style="left:159px;top:3px;width:62px;text-align:right;color:#d41a1a">8.84621</div></div><div class="a" style="left:9px;top:713px;width:226px;height:8px;overflow:hidden"><div class="a" style="left:0;top:19px;width:226px;height:1px;background:#c9d3c9"></div><div class="a" style="left:93px;top:0;width:1px;height:20px;background:#c9d3c9"></div><div class="a" style="left:158px;top:0;width:1px;height:20px;background:#c9d3c9"></div><svg class="a" style="left:4px;top:3px" width="12" height="12"><path d="M5.5 10.5 L10.6 5.3 H7.8 V1.7 Q5.5 .7 3.2 1.7 V5.3 H0.4 Z" fill="url(#gd)" stroke="#b03a0c" stroke-width=".9"/></svg><div class="t" style="left:20px;top:3px;color:#000;letter-spacing:-0.3px">USDHKDm</div><div class="t" style="left:94px;top:3px;width:62px;text-align:right;color:#d41a1a">7.76079</div><div class="t" style="left:159px;top:3px;width:62px;text-align:right;color:#d41a1a">7.76127</div></div><div class="a" style="left:235px;top:115px;width:25px;height:606px;background:#e6eff8"></div><div class="a" style="left:260px;top:100px;width:3px;height:643px;background:#f4f9fd"></div><div class="a" style="left:235px;top:116px;width:23px;height:23px;border:1px solid #b8b8b8;border-radius:3px;background:linear-gradient(90deg,#f4f4f4,#e8e8e8 50%,#d8d8d8)"></div><svg class="a" style="left:237px;top:121px" width="19" height="11"><path d="M7 0 H12 V2 H14 V5 H16 V8 H19 V11 H0 V8 H3 V5 H5 V2 H7 Z" fill="#000"/></svg><div class="a" style="left:235px;top:141px;width:23px;height:49px;border:1px solid #b8b8b8;border-radius:3px;background:linear-gradient(90deg,#f4f4f4,#e8e8e8 50%,#d8d8d8)"></div><svg class="a" style="left:242px;top:160px" width="8" height="8"><path d="M0 1 h7 M0 4 h7 M0 7 h7" stroke="#4a7aa8" stroke-width="1.2"/></svg><div class="a" style="left:235px;top:697px;width:23px;height:23px;border:1px solid #b8b8b8;border-radius:3px;background:linear-gradient(90deg,#f4f4f4,#e8e8e8 50%,#d8d8d8)"></div><svg class="a" style="left:237px;top:703px" width="19" height="11"><path d="M7 11 H12 V9 H14 V6 H16 V3 H19 V0 H0 V3 H3 V6 H5 V9 H7 Z" fill="#000"/></svg><div class="a" style="left:8px;top:721px;width:252px;height:20px;background:#e3edf7;border-top:1px solid #000"></div><div class="a" style="left:8px;top:722px;width:1px;height:19px;background:#a9c1d6"></div><div class="a" style="left:11px;top:721px;width:65px;height:17px;background:#fff;border:1px solid #000;border-top:none;border-right-width:2px;border-bottom-width:2px"></div><div class="t" style="left:20px;top:724px">Символы</div><div class="t" style="left:86px;top:724px;color:#4a7fa7">Тиковый график</div><div class="a" style="left:180px;top:724px;width:1px;height:12px;background:#6a94b8"></div><div class="a" style="left:262px;top:98px;width:3px;height:627px;background:linear-gradient(90deg,#d8eaf6,#a8c4da 60%,#6e94b4)"></div><div class="a" style="left:265px;top:98px;width:1009px;height:625px;background:#000"></div><div class="a" style="left:1273px;top:98px;width:2px;height:647px;background:#d8e6f2"></div><svg class="a" style="left:0;top:0" width="1280" height="771" shape-rendering="crispEdges"><rect x="267.5" y="101.5" width="966" height="387" fill="none" stroke="#fff" stroke-width="1"/><rect x="267.5" y="491.5" width="966" height="214" fill="none" stroke="#fff" stroke-width="1"/><path d="M1234 134.5 h2" stroke="#fff"/><path d="M1234 166.5 h2" stroke="#fff"/><path d="M1234 198.5 h2" stroke="#fff"/><path d="M1234 230.5 h2" stroke="#fff"/><path d="M1234 262.5 h2" stroke="#fff"/><path d="M1234 294.5 h2" stroke="#fff"/><path d="M1234 326.5 h2" stroke="#fff"/><path d="M1234 358.5 h2" stroke="#fff"/><path d="M1234 390.5 h2" stroke="#fff"/><path d="M1234 422.5 h2" stroke="#fff"/><path d="M1234 454.5 h2" stroke="#fff"/><path d="M1234 486.5 h2" stroke="#fff"/><path d="M268 148.5 H1233" stroke="#b4b4b4"/><path d="M268.5 706 v3" stroke="#fff"/><path d="M332.5 706 v3" stroke="#fff"/><path d="M396.5 706 v3" stroke="#fff"/><path d="M460.5 706 v3" stroke="#fff"/><path d="M524.5 706 v3" stroke="#fff"/><path d="M588.5 706 v3" stroke="#fff"/><path d="M652.5 706 v3" stroke="#fff"/><path d="M716.5 706 v3" stroke="#fff"/><path d="M780.5 706 v3" stroke="#fff"/><path d="M844.5 706 v3" stroke="#fff"/><path d="M908.5 706 v3" stroke="#fff"/><path d="M972.5 706 v3" stroke="#fff"/><path d="M268 662.5 H1233" stroke="#c8c8c8" stroke-dasharray="3 3"/><path d="M268 704.5 H1233" stroke="#c8c8c8" stroke-dasharray="3 3"/></svg><svg class="a" style="left:0;top:0" width="1280" height="771" shape-rendering="crispEdges"><defs><clipPath id="cc"><rect x="268" y="102" width="965" height="386"/></clipPath></defs><g clip-path="url(#cc)"><path d="M268.5 411 V428" stroke="#48e048" stroke-width="1"/><rect x="266.5" y="418.5" width="4" height="7" fill="#ffffff" stroke="#48e048" stroke-width="1"/><path d="M276.5 423 V439" stroke="#48e048" stroke-width="1"/><rect x="274.5" y="424.5" width="4" height="7" fill="#ffffff" stroke="#48e048" stroke-width="1"/><path d="M284.5 428 V447" stroke="#48e048" stroke-width="1"/><rect x="282.5" y="431.5" width="4" height="4" fill="#ffffff" stroke="#48e048" stroke-width="1"/><path d="M292.5 427 V443" stroke="#48e048" stroke-width="1"/><rect x="290.5" y="435.5" width="4" height="3" fill="#ffffff" stroke="#48e048" stroke-width="1"/><path d="M300.5 437 V454" stroke="#48e048" stroke-width="1"/><rect x="298.5" y="438.5" width="4" height="8" fill="#ffffff" stroke="#48e048" stroke-width="1"/><path d="M308.5 429 V450" stroke="#48e048" stroke-width="1"/><rect x="306.5" y="436.5" width="4" height="10" fill="#000000" stroke="#48e048" stroke-width="1"/><path d="M316.5 432 V448" stroke="#48e048" stroke-width="1"/><rect x="314.5" y="435.5" width="4" height="3" fill="#ffffff" stroke="#48e048" stroke-width="1"/><path d="M324.5 434 V454" stroke="#48e048" stroke-width="1"/><rect x="322.5" y="438.5" width="4" height="3" fill="#ffffff" stroke="#48e048" stroke-width="1"/><path d="M332.5 439 V452" stroke="#48e048" stroke-width="1"/><rect x="330.5" y="441.5" width="4" height="5" fill="#ffffff" stroke="#48e048" stroke-width="1"/><path d="M340.5 440 V455" stroke="#48e048" stroke-width="1"/><rect x="338.5" y="446.5" width="4" height="8" fill="#ffffff" stroke="#48e048" stroke-width="1"/><path d="M348.5 452 V470" stroke="#48e048" stroke-width="1"/><rect x="346.5" y="454.5" width="4" height="11" fill="#ffffff" stroke="#48e048" stroke-width="1"/><path d="M356.5 460 V479" stroke="#48e048" stroke-width="1"/><rect x="354.5" y="465.5" width="4" height="5" fill="#ffffff" stroke="#48e048" stroke-width="1"/><path d="M364.5 392 V473" stroke="#48e048" stroke-width="1"/><rect x="362.5" y="396.5" width="4" height="74" fill="#000000" stroke="#48e048" stroke-width="1"/><path d="M372.5 367 V424" stroke="#48e048" stroke-width="1"/><rect x="370.5" y="371.5" width="4" height="24" fill="#000000" stroke="#48e048" stroke-width="1"/><path d="M380.5 345 V392" stroke="#48e048" stroke-width="1"/><rect x="378.5" y="370.5" width="4" height="21" fill="#ffffff" stroke="#48e048" stroke-width="1"/><path d="M388.5 370 V399" stroke="#48e048" stroke-width="1"/><rect x="386.5" y="391.5" width="4" height="1" fill="#ffffff" stroke="#48e048" stroke-width="1"/><path d="M396.5 359 V396" stroke="#48e048" stroke-width="1"/><rect x="394.5" y="388.5" width="4" height="2" fill="#000000" stroke="#48e048" stroke-width="1"/><path d="M404.5 383 V421" stroke="#48e048" stroke-width="1"/><rect x="402.5" y="388.5" width="4" height="9" fill="#ffffff" stroke="#48e048" stroke-width="1"/><path d="M412.5 374 V409" stroke="#48e048" stroke-width="1"/><rect x="410.5" y="398.5" width="4" height="3" fill="#ffffff" stroke="#48e048" stroke-width="1"/><path d="M420.5 361 V424" stroke="#48e048" stroke-width="1"/><rect x="418.5" y="365.5" width="4" height="35" fill="#000000" stroke="#48e048" stroke-width="1"/><path d="M428.5 342 V395" stroke="#48e048" stroke-width="1"/><rect x="426.5" y="365.5" width="4" height="24" fill="#ffffff" stroke="#48e048" stroke-width="1"/><path d="M436.5 380 V399" stroke="#48e048" stroke-width="1"/><rect x="434.5" y="387.5" width="4" height="2" fill="#000000" stroke="#48e048" stroke-width="1"/><path d="M444.5 371 V388" stroke="#48e048" stroke-width="1"/><rect x="442.5" y="377.5" width="4" height="10" fill="#000000" stroke="#48e048" stroke-width="1"/><path d="M452.5 358 V383" stroke="#48e048" stroke-width="1"/><rect x="450.5" y="359.5" width="4" height="17" fill="#000000" stroke="#48e048" stroke-width="1"/><path d="M460.5 345 V363" stroke="#48e048" stroke-width="1"/><rect x="458.5" y="355.5" width="4" height="3" fill="#000000" stroke="#48e048" stroke-width="1"/><path d="M468.5 349 V372" stroke="#48e048" stroke-width="1"/><rect x="466.5" y="355.5" width="4" height="15" fill="#ffffff" stroke="#48e048" stroke-width="1"/><path d="M476.5 349 V372" stroke="#48e048" stroke-width="1"/><rect x="474.5" y="356.5" width="4" height="14" fill="#000000" stroke="#48e048" stroke-width="1"/><path d="M484.5 335 V357" stroke="#48e048" stroke-width="1"/><rect x="482.5" y="342.5" width="4" height="14" fill="#000000" stroke="#48e048" stroke-width="1"/><path d="M492.5 318 V345" stroke="#48e048" stroke-width="1"/><rect x="490.5" y="318.5" width="4" height="23" fill="#000000" stroke="#48e048" stroke-width="1"/><path d="M500.5 294 V330" stroke="#48e048" stroke-width="1"/><rect x="498.5" y="297.5" width="4" height="20" fill="#000000" stroke="#48e048" stroke-width="1"/><path d="M508.5 295 V324" stroke="#48e048" stroke-width="1"/><rect x="506.5" y="297.5" width="4" height="24" fill="#ffffff" stroke="#48e048" stroke-width="1"/><path d="M516.5 284 V322" stroke="#48e048" stroke-width="1"/><rect x="514.5" y="293.5" width="4" height="28" fill="#000000" stroke="#48e048" stroke-width="1"/><path d="M524.5 266 V294" stroke="#48e048" stroke-width="1"/><rect x="522.5" y="280.5" width="4" height="13" fill="#000000" stroke="#48e048" stroke-width="1"/><path d="M532.5 278 V290" stroke="#48e048" stroke-width="1"/><rect x="530.5" y="280.5" width="4" height="4" fill="#ffffff" stroke="#48e048" stroke-width="1"/><path d="M540.5 279 V296" stroke="#48e048" stroke-width="1"/><rect x="538.5" y="285.5" width="4" height="5" fill="#ffffff" stroke="#48e048" stroke-width="1"/><path d="M548.5 278 V322" stroke="#48e048" stroke-width="1"/><rect x="546.5" y="290.5" width="4" height="11" fill="#ffffff" stroke="#48e048" stroke-width="1"/><path d="M556.5 302 V341" stroke="#48e048" stroke-width="1"/><rect x="554.5" y="302.5" width="4" height="2" fill="#ffffff" stroke="#48e048" stroke-width="1"/><path d="M564.5 278 V315" stroke="#48e048" stroke-width="1"/><rect x="562.5" y="301.5" width="4" height="4" fill="#000000" stroke="#48e048" stroke-width="1"/><path d="M572.5 294 V326" stroke="#48e048" stroke-width="1"/><rect x="570.5" y="301.5" width="4" height="8" fill="#ffffff" stroke="#48e048" stroke-width="1"/><path d="M580.5 308 V337" stroke="#48e048" stroke-width="1"/><rect x="578.5" y="309.5" width="4" height="25" fill="#ffffff" stroke="#48e048" stroke-width="1"/><path d="M588.5 327 V355" stroke="#48e048" stroke-width="1"/><rect x="586.5" y="332.5" width="4" height="2" fill="#000000" stroke="#48e048" stroke-width="1"/><path d="M596.5 311 V372" stroke="#48e048" stroke-width="1"/><rect x="594.5" y="332.5" width="4" height="23" fill="#ffffff" stroke="#48e048" stroke-width="1"/><path d="M604.5 313 V364" stroke="#48e048" stroke-width="1"/><rect x="602.5" y="319.5" width="4" height="36" fill="#000000" stroke="#48e048" stroke-width="1"/><path d="M612.5 288 V349" stroke="#48e048" stroke-width="1"/><rect x="610.5" y="298.5" width="4" height="20" fill="#000000" stroke="#48e048" stroke-width="1"/><path d="M620.5 287 V328" stroke="#48e048" stroke-width="1"/><rect x="618.5" y="298.5" width="4" height="3" fill="#ffffff" stroke="#48e048" stroke-width="1"/><path d="M628.5 295 V319" stroke="#48e048" stroke-width="1"/><rect x="626.5" y="302.5" width="4" height="15" fill="#ffffff" stroke="#48e048" stroke-width="1"/><path d="M636.5 307 V324" stroke="#48e048" stroke-width="1"/><rect x="634.5" y="317.5" width="4" height="1" fill="#ffffff" stroke="#48e048" stroke-width="1"/><path d="M644.5 300 V322" stroke="#48e048" stroke-width="1"/><rect x="642.5" y="305.5" width="4" height="12" fill="#000000" stroke="#48e048" stroke-width="1"/><path d="M652.5 291 V317" stroke="#48e048" stroke-width="1"/><rect x="650.5" y="305.5" width="4" height="6" fill="#ffffff" stroke="#48e048" stroke-width="1"/><path d="M660.5 304 V313" stroke="#48e048" stroke-width="1"/><rect x="658.5" y="306.5" width="4" height="5" fill="#000000" stroke="#48e048" stroke-width="1"/><path d="M668.5 302 V350" stroke="#48e048" stroke-width="1"/><rect x="666.5" y="303.5" width="4" height="3" fill="#000000" stroke="#48e048" stroke-width="1"/><path d="M676.5 292 V306" stroke="#48e048" stroke-width="1"/><rect x="674.5" y="293.5" width="4" height="10" fill="#000000" stroke="#48e048" stroke-width="1"/><path d="M684.5 285 V320" stroke="#48e048" stroke-width="1"/><rect x="682.5" y="293.5" width="4" height="7" fill="#ffffff" stroke="#48e048" stroke-width="1"/><path d="M692.5 278 V310" stroke="#48e048" stroke-width="1"/><rect x="690.5" y="283.5" width="4" height="17" fill="#000000" stroke="#48e048" stroke-width="1"/><path d="M700.5 259 V285" stroke="#48e048" stroke-width="1"/><rect x="698.5" y="272.5" width="4" height="11" fill="#000000" stroke="#48e048" stroke-width="1"/><path d="M708.5 268 V277" stroke="#48e048" stroke-width="1"/><path d="M706 273.5 H711" stroke="#48e048"/><path d="M716.5 269 V284" stroke="#48e048" stroke-width="1"/><rect x="714.5" y="273.5" width="4" height="8" fill="#ffffff" stroke="#48e048" stroke-width="1"/><path d="M724.5 281 V305" stroke="#48e048" stroke-width="1"/><rect x="722.5" y="281.5" width="4" height="6" fill="#ffffff" stroke="#48e048" stroke-width="1"/><path d="M732.5 278 V296" stroke="#48e048" stroke-width="1"/><rect x="730.5" y="278.5" width="4" height="9" fill="#000000" stroke="#48e048" stroke-width="1"/><path d="M740.5 256 V286" stroke="#48e048" stroke-width="1"/><rect x="738.5" y="275.5" width="4" height="3" fill="#000000" stroke="#48e048" stroke-width="1"/><path d="M748.5 241 V284" stroke="#48e048" stroke-width="1"/><rect x="746.5" y="242.5" width="4" height="32" fill="#000000" stroke="#48e048" stroke-width="1"/><path d="M756.5 209 V266" stroke="#48e048" stroke-width="1"/><rect x="754.5" y="243.5" width="4" height="3" fill="#ffffff" stroke="#48e048" stroke-width="1"/><path d="M764.5 218 V269" stroke="#48e048" stroke-width="1"/><rect x="762.5" y="225.5" width="4" height="21" fill="#000000" stroke="#48e048" stroke-width="1"/><path d="M772.5 216 V242" stroke="#48e048" stroke-width="1"/><rect x="770.5" y="225.5" width="4" height="16" fill="#ffffff" stroke="#48e048" stroke-width="1"/><path d="M780.5 230 V300" stroke="#48e048" stroke-width="1"/><rect x="778.5" y="241.5" width="4" height="20" fill="#ffffff" stroke="#48e048" stroke-width="1"/><path d="M788.5 256 V319" stroke="#48e048" stroke-width="1"/><rect x="786.5" y="262.5" width="4" height="27" fill="#ffffff" stroke="#48e048" stroke-width="1"/><path d="M796.5 245 V296" stroke="#48e048" stroke-width="1"/><rect x="794.5" y="263.5" width="4" height="27" fill="#000000" stroke="#48e048" stroke-width="1"/><path d="M804.5 218 V281" stroke="#48e048" stroke-width="1"/><rect x="802.5" y="234.5" width="4" height="29" fill="#000000" stroke="#48e048" stroke-width="1"/><path d="M812.5 231 V252" stroke="#48e048" stroke-width="1"/><rect x="810.5" y="234.5" width="4" height="7" fill="#ffffff" stroke="#48e048" stroke-width="1"/><path d="M820.5 240 V276" stroke="#48e048" stroke-width="1"/><rect x="818.5" y="242.5" width="4" height="23" fill="#ffffff" stroke="#48e048" stroke-width="1"/><path d="M828.5 249 V272" stroke="#48e048" stroke-width="1"/><rect x="826.5" y="266.5" width="4" height="3" fill="#ffffff" stroke="#48e048" stroke-width="1"/><path d="M836.5 254 V274" stroke="#48e048" stroke-width="1"/><rect x="834.5" y="262.5" width="4" height="8" fill="#000000" stroke="#48e048" stroke-width="1"/><path d="M844.5 238 V266" stroke="#48e048" stroke-width="1"/><rect x="842.5" y="238.5" width="4" height="23" fill="#000000" stroke="#48e048" stroke-width="1"/><path d="M852.5 226 V244" stroke="#48e048" stroke-width="1"/><path d="M850 239.5 H855" stroke="#48e048"/><path d="M860.5 229 V246" stroke="#48e048" stroke-width="1"/><rect x="858.5" y="236.5" width="4" height="5" fill="#000000" stroke="#48e048" stroke-width="1"/><path d="M868.5 210 V238" stroke="#48e048" stroke-width="1"/><rect x="866.5" y="215.5" width="4" height="20" fill="#000000" stroke="#48e048" stroke-width="1"/><path d="M876.5 211 V228" stroke="#48e048" stroke-width="1"/><rect x="874.5" y="215.5" width="4" height="9" fill="#ffffff" stroke="#48e048" stroke-width="1"/><path d="M884.5 211 V236" stroke="#48e048" stroke-width="1"/><rect x="882.5" y="218.5" width="4" height="5" fill="#000000" stroke="#48e048" stroke-width="1"/><path d="M892.5 213 V235" stroke="#48e048" stroke-width="1"/><rect x="890.5" y="218.5" width="4" height="16" fill="#ffffff" stroke="#48e048" stroke-width="1"/><path d="M900.5 220 V239" stroke="#48e048" stroke-width="1"/><rect x="898.5" y="234.5" width="4" height="1" fill="#ffffff" stroke="#48e048" stroke-width="1"/><path d="M908.5 225 V238" stroke="#48e048" stroke-width="1"/><rect x="906.5" y="231.5" width="4" height="4" fill="#000000" stroke="#48e048" stroke-width="1"/><path d="M916.5 230 V242" stroke="#48e048" stroke-width="1"/><rect x="914.5" y="231.5" width="4" height="6" fill="#ffffff" stroke="#48e048" stroke-width="1"/><path d="M924.5 215 V239" stroke="#48e048" stroke-width="1"/><rect x="922.5" y="219.5" width="4" height="19" fill="#000000" stroke="#48e048" stroke-width="1"/><path d="M932.5 202 V223" stroke="#48e048" stroke-width="1"/><rect x="930.5" y="219.5" width="4" height="2" fill="#ffffff" stroke="#48e048" stroke-width="1"/><path d="M940.5 202 V237" stroke="#48e048" stroke-width="1"/><rect x="938.5" y="211.5" width="4" height="10" fill="#000000" stroke="#48e048" stroke-width="1"/><path d="M948.5 167 V213" stroke="#48e048" stroke-width="1"/><rect x="946.5" y="190.5" width="4" height="21" fill="#000000" stroke="#48e048" stroke-width="1"/><path d="M956.5 169 V201" stroke="#48e048" stroke-width="1"/><rect x="954.5" y="171.5" width="4" height="18" fill="#000000" stroke="#48e048" stroke-width="1"/><path d="M964.5 127 V177" stroke="#48e048" stroke-width="1"/><rect x="962.5" y="147.5" width="4" height="24" fill="#000000" stroke="#48e048" stroke-width="1"/><path d="M972.5 138 V160" stroke="#48e048" stroke-width="1"/><path d="M970 147.5 H975" stroke="#48e048"/><path d="M980.5 130 V177" stroke="#48e048" stroke-width="1"/><rect x="978.5" y="148.5" width="4" height="21" fill="#ffffff" stroke="#48e048" stroke-width="1"/><path d="M988.5 146 V180" stroke="#48e048" stroke-width="1"/><rect x="986.5" y="150.5" width="4" height="19" fill="#000000" stroke="#48e048" stroke-width="1"/><path d="M996.5 121 V157" stroke="#48e048" stroke-width="1"/><path d="M994 150.5 H999" stroke="#48e048"/><path d="M1004.5 137 V152" stroke="#48e048" stroke-width="1"/><rect x="1002.5" y="148.5" width="4" height="1" fill="#000000" stroke="#48e048" stroke-width="1"/><path d="M1012.5 142 V156" stroke="#48e048" stroke-width="1"/><rect x="1010.5" y="148.5" width="4" height="2" fill="#ffffff" stroke="#48e048" stroke-width="1"/><path d="M1020.5 137 V153" stroke="#48e048" stroke-width="1"/><rect x="1018.5" y="148.5" width="4" height="1" fill="#000000" stroke="#48e048" stroke-width="1"/></g></svg><svg class="a" style="left:0;top:0" width="1280" height="771"><polyline points="268.5,582.1 276.5,605.8 284.5,605.8 292.5,611.1 300.5,635.1 308.5,640.7 316.5,668.7 324.5,678.0 332.5,681.1 340.5,679.6 348.5,680.2 356.5,681.8 364.5,638.2 372.5,631.9 380.5,619.5 388.5,606.4 396.5,591.8 404.5,591.8 412.5,580.0 420.5,560.3 428.5,590.9 436.5,601.7 444.5,605.8 452.5,608.0 460.5,618.3 468.5,618.3 476.5,624.5 484.5,632.9 492.5,632.9 500.5,625.7 508.5,633.2 516.5,623.5 524.5,617.0 532.5,618.3 540.5,622.0 548.5,627.6 556.5,639.1 564.5,639.7 572.5,636.0 580.5,653.1 588.5,668.7 596.5,653.1 604.5,636.9 612.5,626.7 620.5,620.4 628.5,630.7 636.5,629.8 644.5,619.5 652.5,616.4 660.5,622.6 668.5,642.2 676.5,656.9 684.5,658.7 692.5,650.6 700.5,643.8 708.5,651.6 716.5,656.9 724.5,660.9 732.5,657.8 740.5,651.6 748.5,636.6 756.5,629.8 764.5,626.0 772.5,624.0 780.5,621.4 788.5,617.3 796.5,600.2 804.5,584.0 812.5,598.6 820.5,617.3 828.5,625.1 836.5,618.9 844.5,612.6 852.5,610.2 860.5,628.8 868.5,640.7 876.5,640.7 884.5,635.1 892.5,642.2 900.5,642.2 908.5,650.0 916.5,656.9 924.5,651.6 932.5,656.2 940.5,646.9 948.5,629.8 956.5,620.4 964.5,603.3 972.5,602.7 980.5,594.0 988.5,594.0 996.5,586.2 1004.5,589.3 1012.5,608.9 1020.5,611.1" fill="none" stroke="#26902a" stroke-width="1.7" stroke-linejoin="round"/><polyline points="268.5,629.8 276.5,626.7 284.5,640.7 292.5,669.3 300.5,660.9 308.5,662.5 316.5,663.1 324.5,653.7 332.5,653.7 340.5,655.6 348.5,655.6 356.5,652.5 364.5,659.3 372.5,645.3 380.5,639.1 388.5,645.3 396.5,647.8 404.5,635.1 412.5,636.0 420.5,629.8 428.5,616.7 436.5,625.7 444.5,638.2 452.5,639.7 460.5,640.7 468.5,648.4 476.5,656.2 484.5,668.7 492.5,682.7 500.5,682.7 508.5,668.7 516.5,671.8 524.5,672.1 532.5,677.1 540.5,671.2 548.5,653.7 556.5,633.8 564.5,634.4 572.5,635.4 580.5,619.5 588.5,608.0 596.5,590.9 604.5,592.4 612.5,592.4 620.5,597.7 628.5,595.5 636.5,606.4 644.5,619.5 652.5,625.1 660.5,646.9 668.5,627.6 676.5,642.2 684.5,644.4 692.5,646.9 700.5,650.0 708.5,650.0 716.5,650.0 724.5,638.2 732.5,656.2 740.5,655.6 748.5,665.0 756.5,656.2 764.5,646.3 772.5,637.6 780.5,611.1 788.5,594.0 796.5,594.0 804.5,587.7 812.5,582.1 820.5,577.8 828.5,586.2 836.5,594.6 844.5,624.5 852.5,655.6 860.5,656.2 868.5,664.0 876.5,667.1 884.5,678.6 892.5,671.8 900.5,671.8 908.5,671.8 916.5,669.6 924.5,670.9 932.5,670.2 940.5,668.7 948.5,675.5 956.5,678.6 964.5,678.6 972.5,671.8 980.5,660.9 988.5,654.7 996.5,654.7 1004.5,662.5 1012.5,668.7 1020.5,669.3" fill="none" stroke="#f05a2a" stroke-width="1.7" stroke-linejoin="round"/></svg><div class="t" style="left:272px;top:103px;color:#fff;font-size:10px;letter-spacing:-0.36px">CHFJPYm,H1&nbsp; 89.691 89.778 89.680 89.710</div><div class="t" style="left:272px;top:494px;color:#fff;font-size:10px;letter-spacing:-0.4px">Orient-express(8) 2.19 0.83</div><div class="t" style="left:1239px;top:128px;color:#fff;font-size:9px;letter-spacing:0.2px">89.795</div><div class="t" style="left:1239px;top:160px;color:#fff;font-size:9px;letter-spacing:0.2px">89.590</div><div class="t" style="left:1239px;top:192px;color:#fff;font-size:9px;letter-spacing:0.2px">89.385</div><div class="t" style="left:1239px;top:224px;color:#fff;font-size:9px;letter-spacing:0.2px">89.180</div><div class="t" style="left:1239px;top:256px;color:#fff;font-size:9px;letter-spacing:0.2px">88.970</div><div class="t" style="left:1239px;top:288px;color:#fff;font-size:9px;letter-spacing:0.2px">88.765</div><div class="t" style="left:1239px;top:320px;color:#fff;font-size:9px;letter-spacing:0.2px">88.560</div><div class="t" style="left:1239px;top:352px;color:#fff;font-size:9px;letter-spacing:0.2px">88.355</div><div class="t" style="left:1239px;top:384px;color:#fff;font-size:9px;letter-spacing:0.2px">88.145</div><div class="t" style="left:1239px;top:416px;color:#fff;font-size:9px;letter-spacing:0.2px">87.940</div><div class="t" style="left:1239px;top:448px;color:#fff;font-size:9px;letter-spacing:0.2px">87.735</div><div class="t" style="left:1239px;top:480px;color:#fff;font-size:9px;letter-spacing:0.2px">87.530</div><div class="a" style="left:1236px;top:142px;width:34px;height:11px;background:#fff"></div><div class="t" style="left:1239px;top:142px;color:#000;font-size:9px;letter-spacing:0.2px">89.710</div><div class="t" style="left:1237px;top:491px;color:#fff;font-size:9px">5</div><div class="t" style="left:1237px;top:655px;color:#fff;font-size:9px">1</div><div class="t" style="left:1237px;top:692px;color:#fff;font-size:9px">0</div><div class="t" style="left:268px;top:709px;color:#fff;font-size:9px;letter-spacing:0.15px">16 Apr 2012</div><div class="t" style="left:332px;top:709px;color:#fff;font-size:9px;letter-spacing:0.15px">17 Apr 03:00</div><div class="t" style="left:396px;top:709px;color:#fff;font-size:9px;letter-spacing:0.15px">17 Apr 11:00</div><div class="t" style="left:460px;top:709px;color:#fff;font-size:9px;letter-spacing:0.15px">17 Apr 19:00</div><div class="t" style="left:524px;top:709px;color:#fff;font-size:9px;letter-spacing:0.15px">18 Apr 03:00</div><div class="t" style="left:588px;top:709px;color:#fff;font-size:9px;letter-spacing:0.15px">18 Apr 11:00</div><div class="t" style="left:652px;top:709px;color:#fff;font-size:9px;letter-spacing:0.15px">18 Apr 19:00</div><div class="t" style="left:716px;top:709px;color:#fff;font-size:9px;letter-spacing:0.15px">19 Apr 03:00</div><div class="t" style="left:780px;top:709px;color:#fff;font-size:9px;letter-spacing:0.15px">19 Apr 11:00</div><div class="t" style="left:844px;top:709px;color:#fff;font-size:9px;letter-spacing:0.15px">19 Apr 19:00</div><div class="t" style="left:908px;top:709px;color:#fff;font-size:9px;letter-spacing:0.15px">20 Apr 03:00</div><div class="t" style="left:972px;top:709px;color:#fff;font-size:9px;letter-spacing:0.15px">20 Apr 11:00</div><div class="t" style="left:545px;top:244px;color:#efdc8c;font-size:14px;letter-spacing:-0.3px">Sell</div><div class="t" style="left:649px;top:357px;color:#efdc8c;font-size:14px;letter-spacing:-0.3px">Buy</div><div class="t" style="left:376px;top:449px;color:#efdc8c;font-size:14px;letter-spacing:-0.3px">Buy</div><svg class="a" style="left:541px;top:264px" width="11" height="13"><path d="M3.5 0.5 H7.5 V6 H10.5 L5.5 11.5 L0.5 6 H3.5 Z" fill="none" stroke="#e048e0" stroke-width="1.2"/></svg><svg class="a" style="left:639px;top:331px" width="11" height="13"><path d="M3.5 10.5 H7.5 V5.5 H10.5 L5.5 0.5 L0.5 5.5 H3.5 Z" fill="none" stroke="#e048e0" stroke-width="1.2"/></svg><svg class="a" style="left:359px;top:471px" width="11" height="13"><path d="M3.5 10.5 H7.5 V5.5 H10.5 L5.5 0.5 L0.5 5.5 H3.5 Z" fill="none" stroke="#e048e0" stroke-width="1.2"/></svg><svg class="a" style="left:1035px;top:101px" width="10" height="6"><path d="M0 0 H9 L4.5 5 Z" fill="#a0a0a0"/></svg><div class="a" style="left:264px;top:723px;width:1010px;height:22px;background:#e3edf7"></div><div class="a" style="left:265px;top:723px;width:1009px;height:2px;background:#fff"></div><div class="a" style="left:265px;top:725px;width:1009px;height:1px;background:#000"></div><div class="a" style="left:263px;top:725px;width:2px;height:20px;background:#6f98bc"></div><div class="a" style="left:351px;top:725px;width:84px;height:18px;background:#fff;border:1px solid #000;border-top:none;border-right-width:2px;border-bottom-width:2px"></div><div class="t" style="left:277px;top:728px;color:#4a80a8;letter-spacing:-0.75px">EURJPYm,H1</div><div class="t" style="left:361px;top:728px;color:#000;letter-spacing:-0.75px">CHFJPYm,H1</div><div class="t" style="left:444px;top:728px;color:#4a80a8;letter-spacing:-0.75px">NOKJPYm,H1</div><div class="t" style="left:529px;top:728px;color:#4a80a8;letter-spacing:-0.75px">CADJPYm,H1</div><div class="t" style="left:613px;top:728px;color:#4a80a8;letter-spacing:-0.75px">GBPJPYm,H1</div><div class="t" style="left:697px;top:728px;color:#4a80a8;letter-spacing:-0.75px">USDJPYm,H1</div><div class="t" style="left:781px;top:728px;color:#4a80a8;letter-spacing:-0.75px">PLJ2,Daily</div><div class="t" style="left:853px;top:728px;color:#4a80a8;letter-spacing:-0.75px">HKDJPYm,H1</div><div class="t" style="left:939px;top:728px;color:#4a80a8;letter-spacing:-0.75px">NZDJPYm,Daily</div><div class="t" style="left:1033px;top:728px;color:#4a80a8;letter-spacing:-0.75px">EURUSDm,H1</div><div class="t" style="left:1121px;top:728px;color:#4a80a8;letter-spacing:-0.75px">AUDJPYm,Daily</div><div class="a" style="left:1217px;top:725px;width:26px;height:18px;overflow:hidden"><div class="t" style="left:0;top:3px;color:#4a80a8;letter-spacing:-0.75px">EURUSDm</div></div><div class="a" style="left:519px;top:729px;width:1px;height:12px;background:#4a80a8"></div><div class="a" style="left:603px;top:729px;width:1px;height:12px;background:#4a80a8"></div><div class="a" style="left:687px;top:729px;width:1px;height:12px;background:#4a80a8"></div><div class="a" style="left:771px;top:729px;width:1px;height:12px;background:#4a80a8"></div><div class="a" style="left:843px;top:729px;width:1px;height:12px;background:#4a80a8"></div><div class="a" style="left:927px;top:729px;width:1px;height:12px;background:#4a80a8"></div><div class="a" style="left:1023px;top:729px;width:1px;height:12px;background:#4a80a8"></div><div class="a" style="left:1111px;top:729px;width:1px;height:12px;background:#4a80a8"></div><div class="a" style="left:1207px;top:729px;width:1px;height:12px;background:#4a80a8"></div><svg class="a" style="left:1245px;top:731px" width="6" height="8"><path d="M5 0 V8 L0 4 Z" fill="#98a8b8"/></svg><svg class="a" style="left:1263px;top:731px" width="6" height="8"><path d="M0 0 V8 L5 4 Z" fill="#000"/></svg><div class="a" style="left:4px;top:744px;width:1271px;height:22px;background:linear-gradient(#e8eefa 80%,#e0ecf8);border-top:1px solid #f4f8fc"></div><div class="a" style="left:8px;top:743px;width:256px;height:1px;background:#7aa0c0"></div><div class="a" style="left:0px;top:769px;width:1280px;height:1px;background:#2e5270"></div><div class="t" style="left:8px;top:751px">Для справки, нажмите F1</div><div class="a" style="left:562px;top:748px;width:1px;height:18px;background:#a9c1d6"></div><div class="a" style="left:669px;top:748px;width:1px;height:18px;background:#a9c1d6"></div><div class="a" style="left:770px;top:748px;width:1px;height:18px;background:#a9c1d6"></div><div class="a" style="left:841px;top:748px;width:1px;height:18px;background:#a9c1d6"></div><div class="a" style="left:910px;top:748px;width:1px;height:18px;background:#a9c1d6"></div><div class="a" style="left:978px;top:748px;width:1px;height:18px;background:#a9c1d6"></div><div class="a" style="left:1047px;top:748px;width:1px;height:18px;background:#a9c1d6"></div><div class="a" style="left:1114px;top:748px;width:1px;height:18px;background:#a9c1d6"></div><div class="t" style="left:568px;top:751px">Nur</div><svg class="a" style="left:1119px;top:751px" width="24" height="12"><rect x="0" y="0" width="2" height="12" fill="#5f8c12"/><rect x="0" y="10.5" width="2" height="1.5" fill="#b02812"/><rect x="3" y="0" width="2" height="12" fill="#5f8c12"/><rect x="3" y="9.2" width="2" height="2.9" fill="#b02812"/><rect x="6" y="0" width="2" height="12" fill="#5f8c12"/><rect x="6" y="7.8" width="2" height="4.2" fill="#b02812"/><rect x="9" y="0" width="2" height="12" fill="#5f8c12"/><rect x="9" y="6.4" width="2" height="5.6" fill="#b02812"/><rect x="12" y="0" width="2" height="12" fill="#5f8c12"/><rect x="12" y="5.1" width="2" height="6.9" fill="#b02812"/><rect x="15" y="0" width="2" height="12" fill="#5f8c12"/><rect x="15" y="3.8" width="2" height="8.2" fill="#b02812"/><rect x="18" y="0" width="2" height="12" fill="#5f8c12"/><rect x="18" y="2.4" width="2" height="9.6" fill="#b02812"/><rect x="21" y="0" width="2" height="12" fill="#5f8c12"/><rect x="21" y="1.0" width="2" height="11.0" fill="#b02812"/></svg><div class="t" style="left:1161px;top:751px">369/2 kb</div><svg class="a" style="left:1260px;top:751px" width="15" height="15"><path d="M14 2 L2 14 M14 6 L6 14 M14 10 L10 14" stroke="#9ab8d2" stroke-width="1.6"/></svg></body></html>
